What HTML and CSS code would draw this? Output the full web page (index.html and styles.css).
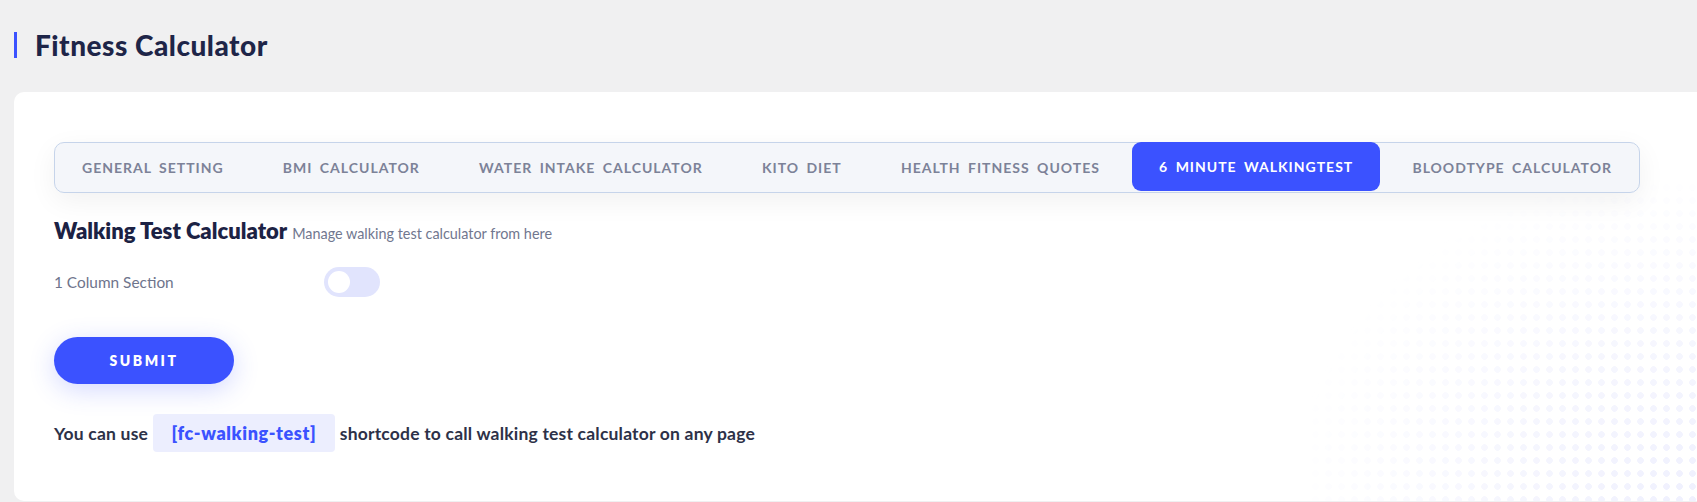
FILE: index.html
```html
<!DOCTYPE html>
<html lang="en">
<head>
<meta charset="utf-8">
<title>Fitness Calculator</title>
<link rel="stylesheet" href="styles.css">
</head>
<body>
<h1 class="page-title">Fitness Calculator</h1>
<div class="card">
  <div class="halftone" aria-hidden="true"></div>
  <nav class="tabs">
    <a class="tab">General Setting</a>
    <a class="tab">BMI Calculator</a>
    <a class="tab">Water Intake Calculator</a>
    <a class="tab">Kito Diet</a>
    <a class="tab">Health Fitness Quotes</a>
    <a class="tab active">6 Minute WalkingTest</a>
    <a class="tab">Bloodtype Calculator</a>
  </nav>
  <div class="section-head">
    <h2 class="section-title">Walking Test Calculator</h2>
    <span class="section-sub">Manage walking test calculator from here</span>
  </div>
  <div class="field-row">
    <label class="field-label">1 Column Section</label>
    <span class="toggle"><span class="knob"></span></span>
  </div>
  <button class="submit">SUBMIT</button>
  <p class="shortcode-line">You can use <code class="shortcode">[fc-walking-test]</code> shortcode to call walking test calculator on any page</p>
</div>
</body>
</html>
```
FILE: styles.css
```css
html { overflow: hidden; }
body {
  margin: 0;
  background: #f0f0f1;
  font-family: Lato, "Noto Sans", sans-serif;
  color: #1d2346;
  height: 502px;
}
.page-title {
  margin: 32px 0 0 14px;
  padding-left: 18px;
  border-left: 3px solid #3b52ff;
  font-size: 28px;
  line-height: 26px;
  font-weight: 900;
  color: #1e2548;
  letter-spacing: 0.5px;
}
.card {
  position: relative;
  overflow: hidden;
  margin: 34px -12px 0 14px;
  background: #fff;
  border-radius: 10px;
  padding: 50px 69px 0 40px;
  height: 359px;
}
.halftone {
  position: absolute;
  right: 0;
  bottom: 0;
  width: 400px;
  height: 320px;
  background-image: radial-gradient(circle, #eff0fe 3px, transparent 3.6px);
  background-size: 13px 13px;
  -webkit-mask-image: radial-gradient(ellipse at 100% 100%, #000 0%, rgba(0,0,0,0.6) 35%, transparent 75%);
  mask-image: radial-gradient(ellipse at 100% 100%, #000 0%, rgba(0,0,0,0.6) 35%, transparent 75%);
  pointer-events: none;
}
.tabs {
  position: relative;
  display: flex;
  justify-content: space-between;
  height: 49px;
  border: 1px solid #c6d4ea;
  border-radius: 10px;
  background: #f4f6fa;
  box-shadow: 0 8px 28px rgba(0, 0, 0, 0.06);
}
.tab {
  display: flex;
  align-items: center;
  padding: 0 27px;
  font-size: 14px;
  font-weight: 700;
  text-transform: uppercase;
  letter-spacing: 1px;
  word-spacing: 3px;
  color: #7c8298;
  white-space: nowrap;
  border-radius: 9px;
}
.tab.active {
  background: #3b52ff;
  color: #fff;
  margin: -1px 0;
  height: 49px;
}
.section-head {
  position: relative;
  display: flex;
  align-items: baseline;
  gap: 5px;
  margin-top: 24px;
}
.section-title {
  margin: 0;
  font-size: 22px;
  line-height: 28px;
  font-weight: 800;
  color: #1c2244;
}
.section-sub {
  font-size: 14.4px;
  color: #71778f;
}
.field-row {
  position: relative;
  display: flex;
  align-items: center;
  margin-top: 21px;
  height: 31px;
}
.field-label {
  width: 270px;
  font-size: 15.4px;
  color: #6e748c;
}
.toggle {
  display: flex;
  align-items: center;
  width: 56px;
  height: 30px;
  padding: 0 4px;
  box-sizing: border-box;
  border-radius: 15px;
  background: #e1e4fd;
}
.knob {
  width: 22px;
  height: 22px;
  border-radius: 50%;
  background: #fff;
}
.submit {
  position: relative;
  display: block;
  margin-top: 40px;
  width: 180px;
  height: 47px;
  border: 0;
  border-radius: 24px;
  background: #3b52ff;
  color: #fff;
  font-family: inherit;
  font-size: 14px;
  font-weight: 800;
  letter-spacing: 2.5px;
  box-shadow: 0 6px 26px rgba(59, 82, 255, 0.22);
}
.shortcode-line {
  position: relative;
  margin: 30px 0 0;
  font-size: 17.5px;
  font-weight: 700;
  color: #2d3148;
  line-height: 38px;
  letter-spacing: 0.2px;
}
.shortcode {
  display: inline-block;
  margin: 0;
  padding: 0 19px;
  background: #eceefe;
  border-radius: 4px;
  font-family: inherit;
  font-size: 18px;
  font-weight: 800;
  letter-spacing: 0.6px;
  color: #3b52ff;
}
```
